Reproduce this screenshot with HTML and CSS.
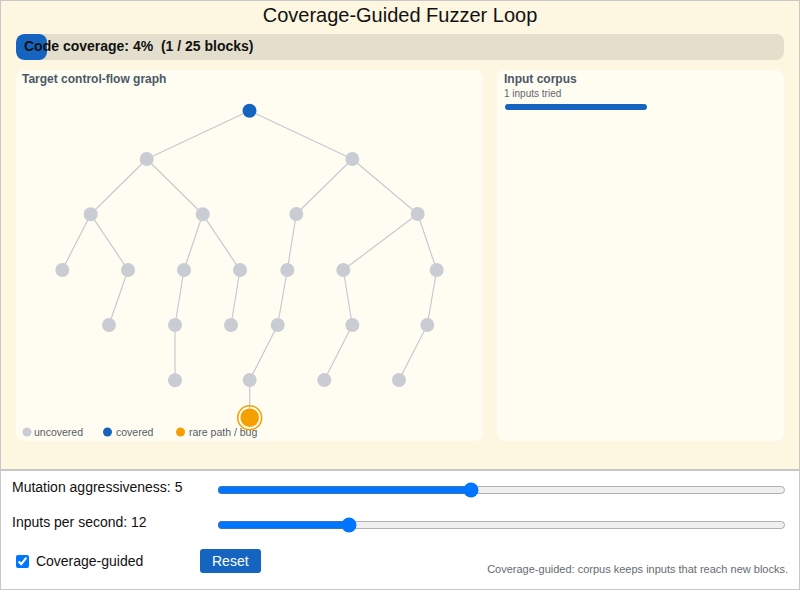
FILE: index.html
```html
<!DOCTYPE html>
<html lang="en">
<head>
  <meta charset="UTF-8">
  <title>Coverage-Guided Fuzzer Loop</title>
  <link rel="stylesheet" href="styles.css">
</head>
<body>
  <div class="app">
    <div class="stage">
      <h1>Coverage-Guided Fuzzer Loop</h1>
      <div class="coverage">
        <div class="coverage-fill" style="width: 4%"></div>
        <span class="coverage-text">Code coverage: 4%  (1 / 25 blocks)</span>
      </div>
      <div class="panels">
        <div class="panel graph-panel">
          <div class="panel-title">Target control-flow graph</div>
          <svg class="cfg" viewBox="0 16 467 355" width="467" height="355">
            <g class="edges">
              <line x1="233.5" y1="40.7" x2="130.7" y2="89"/>
              <line x1="233.5" y1="40.7" x2="336.3" y2="89"/>
              <line x1="130.7" y1="89" x2="74.7" y2="144.3"/>
              <line x1="130.7" y1="89" x2="186.7" y2="144.3"/>
              <line x1="336.3" y1="89" x2="280.3" y2="144"/>
              <line x1="336.3" y1="89" x2="401.7" y2="144"/>
              <line x1="74.7" y1="144.3" x2="46.3" y2="200"/>
              <line x1="74.7" y1="144.3" x2="112" y2="200"/>
              <line x1="186.7" y1="144.3" x2="168" y2="200"/>
              <line x1="186.7" y1="144.3" x2="224" y2="200"/>
              <line x1="280.3" y1="144" x2="271.3" y2="200"/>
              <line x1="401.7" y1="144" x2="327.3" y2="200"/>
              <line x1="401.7" y1="144" x2="420.7" y2="200"/>
              <line x1="112" y1="200" x2="93" y2="255"/>
              <line x1="168" y1="200" x2="159" y2="255"/>
              <line x1="224" y1="200" x2="215" y2="255"/>
              <line x1="271.3" y1="200" x2="261.7" y2="255"/>
              <line x1="327.3" y1="200" x2="336.3" y2="255"/>
              <line x1="420.7" y1="200" x2="411.3" y2="255"/>
              <line x1="159" y1="255" x2="159" y2="310"/>
              <line x1="261.7" y1="255" x2="233.7" y2="310"/>
              <line x1="336.3" y1="255" x2="308.3" y2="310"/>
              <line x1="411.3" y1="255" x2="383" y2="310"/>
              <line x1="233.7" y1="310" x2="233.7" y2="347.7"/>
            </g>
            <g class="nodes">
              <circle class="covered" cx="233.5" cy="40.7" r="7"/>
              <circle cx="130.7" cy="89" r="7"/>
              <circle cx="336.3" cy="89" r="7"/>
              <circle cx="74.7" cy="144.3" r="7"/>
              <circle cx="186.7" cy="144.3" r="7"/>
              <circle cx="280.3" cy="144" r="7"/>
              <circle cx="401.7" cy="144" r="7"/>
              <circle cx="46.3" cy="200" r="7"/>
              <circle cx="112" cy="200" r="7"/>
              <circle cx="168" cy="200" r="7"/>
              <circle cx="224" cy="200" r="7"/>
              <circle cx="271.3" cy="200" r="7"/>
              <circle cx="327.3" cy="200" r="7"/>
              <circle cx="420.7" cy="200" r="7"/>
              <circle cx="93" cy="255" r="7"/>
              <circle cx="159" cy="255" r="7"/>
              <circle cx="215" cy="255" r="7"/>
              <circle cx="261.7" cy="255" r="7"/>
              <circle cx="336.3" cy="255" r="7"/>
              <circle cx="411.3" cy="255" r="7"/>
              <circle cx="159" cy="310.3" r="7"/>
              <circle cx="233.7" cy="310" r="7"/>
              <circle cx="308.3" cy="310" r="7"/>
              <circle cx="383" cy="310" r="7"/>
              <circle class="bug-ring" cx="233.7" cy="347.7" r="12"/>
              <circle class="bug" cx="233.7" cy="347.7" r="9.3"/>
            </g>
            <g class="legend">
              <circle cx="11" cy="362" r="4.5"/>
              <text x="18" y="365.5">uncovered</text>
              <circle class="covered" cx="91.5" cy="362" r="4.5"/>
              <text x="100" y="365.5">covered</text>
              <circle class="bug" cx="164.5" cy="362" r="4.5"/>
              <text x="173" y="365.5">rare path / bug</text>
            </g>
          </svg>
        </div>
        <div class="panel corpus-panel">
          <div class="panel-title">Input corpus</div>
          <div class="corpus-count">1 inputs tried</div>
          <div class="corpus-bar"></div>
        </div>
      </div>
    </div>
    <div class="controls">
      <div class="control-row">
        <label class="control-label" for="mutation">Mutation aggressiveness: 5</label>
        <input type="range" id="mutation" min="1" max="10" value="5">
      </div>
      <div class="control-row">
        <label class="control-label" for="rate">Inputs per second: 12</label>
        <input type="range" id="rate" min="1" max="50" value="12">
      </div>
      <div class="control-row bottom-row">
        <label class="check-label"><input type="checkbox" checked> Coverage-guided</label>
        <button class="reset">Reset</button>
        <div class="note">Coverage-guided: corpus keeps inputs that reach new blocks.</div>
      </div>
    </div>
  </div>
</body>
</html>
```

FILE: styles.css
```css
body {
  margin: 0;
  font-family: 'Liberation Sans', Arial, sans-serif;
  background: #fff;
}
.app {
  width: 800px;
  height: 590px;
  box-sizing: border-box;
  border: 1px solid #c8c8c8;
  display: flex;
  flex-direction: column;
}
/* Top area */
.stage {
  height: 470px;
  flex-shrink: 0;
  box-sizing: border-box;
  background: #fdf6e1;
  border-bottom: 2px solid #c8c8c8;
  padding: 3px 15px 0;
}
h1 {
  margin: 0 0 7px;
  font-size: 20px;
  font-weight: 400;
  line-height: 23px;
  text-align: center;
  color: #111;
}
.coverage {
  position: relative;
  height: 26px;
  border-radius: 8px;
  background: #e3dfcc;
  overflow: hidden;
}
.coverage-fill {
  height: 100%;
  background: #1565c0;
  border-radius: 8px;
}
.coverage-text {
  position: absolute;
  left: 8px;
  top: 0;
  line-height: 25px;
  font-size: 14px;
  font-weight: 700;
  color: #111;
  white-space: pre;
}
.panels {
  display: grid;
  grid-template-columns: 1fr 287px;
  gap: 14px;
  margin-top: 10px;
  height: 371px;
}
.panel {
  background: #fffdf1;
  border-radius: 8px;
  padding: 2px 6px 0;
  overflow: hidden;
}
.panel-title {
  font-size: 12px;
  font-weight: 700;
  line-height: 14px;
  color: #4a5866;
}
.cfg {
  display: block;
  margin: 0 -6px;
}
.edges line {
  stroke: #c6cad0;
  stroke-width: 1.2;
}
.nodes circle,
.legend circle {
  fill: #c9cdd3;
}
.cfg .covered {
  fill: #1565c0;
}
.cfg .bug {
  fill: #f59f00;
}
.cfg .bug-ring {
  fill: none;
  stroke: #f59f00;
  stroke-width: 1.5;
}
.legend text {
  font-size: 10.5px;
  fill: #555e68;
}
/* Corpus */
.corpus-panel {
  padding-left: 7px;
}
.corpus-count {
  margin-top: 2px;
  font-size: 10px;
  color: #5f6670;
}
.corpus-bar {
  margin: 5px 0 0 1px;
  width: 142px;
  height: 6px;
  border-radius: 3px;
  background: #1565c0;
}
/* Controls */
.controls {
  flex: 1;
  padding: 8px 13px 0 11px;
  font-size: 14px;
  color: #111;
}
.control-row {
  display: flex;
  align-items: center;
  height: 22px;
  margin-bottom: 13px;
}
.control-label {
  width: 205px;
  padding-bottom: 7px;
}
.control-row input[type="range"] {
  flex: 1;
  margin: 0;
}
.bottom-row {
  height: 24px;
  margin-top: 13px;
}
.check-label {
  width: 188px;
}
.check-label input {
  margin: 3px 3px 3px 4px;
  vertical-align: -2px;
}
.reset {
  height: 24px;
  padding: 0 12px;
  border: none;
  border-radius: 3px;
  background: #1565c0;
  color: #fff;
  font-family: inherit;
  font-size: 14px;
}
.note {
  margin-left: auto;
  align-self: flex-end;
  margin-bottom: -2px;
  margin-right: -2px;
  font-size: 11px;
  color: #666b72;
}
```
